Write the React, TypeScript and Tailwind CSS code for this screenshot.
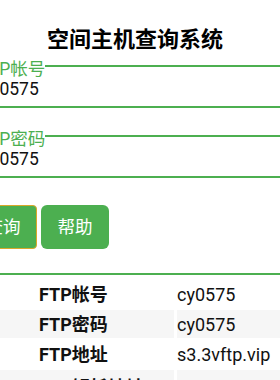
import React from 'react';

const green = 'bg-[#4caf50]';

type Row = { label: string; value: string };

const rows: Row[] = [
  { label: 'FTP帐号', value: 'cy0575' },
  { label: 'FTP密码', value: 'cy0575' },
  { label: 'FTP地址', value: 's3.3vftp.vip' },
  { label: 'FTP解析地址', value: 's3.3vftp.vip' },
];

function Field({ legend, value, className }: { legend: string; value: string; className?: string }) {
  return (
    <div className={`border-b-2 border-[#4caf50] ${className ?? ''}`}>
      <div className="flex h-[20px] items-start pl-[10px]">
        <span className="text-[17.5px] leading-[21px] text-[#4caf50]">{legend}</span>
        <div className={`mt-[6px] h-[2px] flex-1 ${green}`} />
      </div>
      <div className="pb-[7px] pl-[13px] text-[17.5px] leading-[20px] text-[#111]">{value}</div>
    </div>
  );
}

export default function App() {
  return (
    <div className="h-[380px] w-[280px] overflow-hidden bg-white font-['Roboto','Noto_Sans_CJK_SC',sans-serif]">
      <div className="ml-[-40px] w-[350px] px-[9px]">
        <h1 className="pt-[25px] text-center text-[22px] font-bold leading-[30px] text-black">
          空间主机查询系统
        </h1>

        <Field legend="FTP帐号" value="cy0575" className="mt-[4px]" />
        <Field legend="FTP密码" value="cy0575" className="mt-[21px]" />

        <div className="mt-[27px] flex gap-[4px]">
          <button
            type="button"
            className="h-[44px] w-[68px] rounded-[4px] border-[1.5px] border-[#d9a82a] bg-[#4caf50] text-[17.5px] text-white"
          >
            查询
          </button>
          <button
            type="button"
            className="h-[44px] w-[68px] rounded-[6px] bg-[#4caf50] text-[17.5px] text-white"
          >
            帮助
          </button>
        </div>

        <div className={`mt-[24px] h-[2px] ${green}`} />

        <table className="mt-[3px] w-full border-separate border-spacing-x-[3px] border-spacing-y-[2px] text-[18px] text-[#111]">
          <tbody>
            {rows.map((r, i) => {
              const bg = i % 2 === 1 ? 'bg-[#f6f6f6]' : '';
              const h = i === 3 ? 'h-[35px]' : 'h-[28px]';
              return (
                <tr key={r.label}>
                  <td className={`${h} w-[202px] p-0 pl-[67px] font-bold ${bg}`}>{r.label}</td>
                  <td className={`${h} p-0 ${bg}`}>{r.value}</td>
                </tr>
              );
            })}
          </tbody>
        </table>
      </div>
    </div>
  );
}
